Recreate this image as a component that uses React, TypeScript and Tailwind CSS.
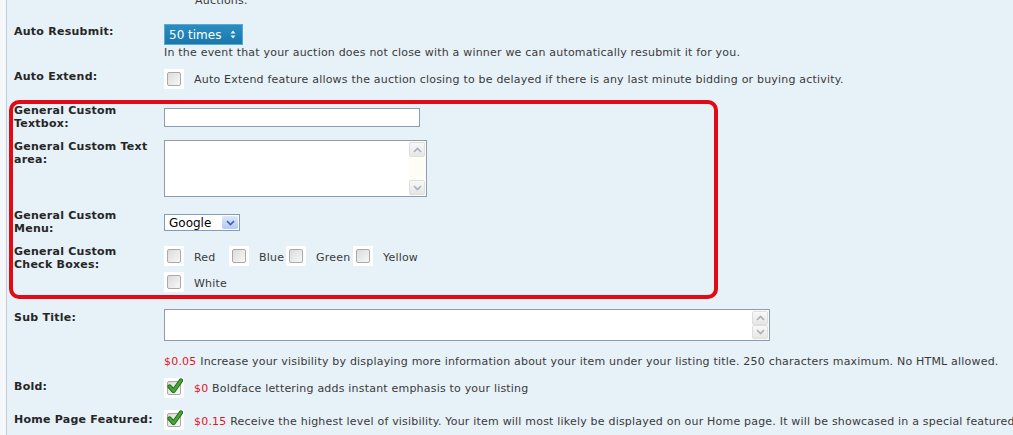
import { FC, JSX, ReactNode } from 'react';
import { clsx } from 'clsx';

const labelClasses = 'w-[150px] shrink-0 text-[11px] leading-[13px] font-bold tracking-[0.25px] text-[#262626]';
const textClasses = 'text-[11px] leading-[13px] tracking-[0.2px] text-[#3a3a3a]';

const Checkbox: FC<{ checked?: boolean }> = ({ checked }): JSX.Element => (
  <span className="relative flex h-[20px] w-[20px] shrink-0 items-center justify-center bg-white">
    <span className="h-[14px] w-[14px] rounded-[2px] border border-[#a9a9a9] bg-linear-to-br from-[#dcdcdc] to-[#f7f7f7]" />
    {checked && (
      <svg
        className="absolute top-[0px] left-[3px]"
        width="16"
        height="16"
        viewBox="0 0 16 16"
        aria-hidden="true"
      >
        <path d="M2.5 8.5 L6.5 13 L14 2.5" fill="none" stroke="#1f5f16" strokeWidth="4.2" strokeLinecap="round" strokeLinejoin="round" />
        <path d="M2.5 8.5 L6.5 13 L14 2.5" fill="none" stroke="#46a834" strokeWidth="2.6" strokeLinecap="round" strokeLinejoin="round" />
      </svg>
    )}
  </span>
);

const Chevron: FC<{ up?: boolean; color?: string }> = ({ up, color = '#a9b0b8' }): JSX.Element => (
  <svg width="9" height="6" viewBox="0 0 9 6" aria-hidden="true">
    <path d={up ? 'M1 5 L4.5 1.5 L8 5' : 'M1 1 L4.5 4.5 L8 1'} fill="none" stroke={color} strokeWidth="1.6" />
  </svg>
);

const ScrollArrows: FC = (): JSX.Element => (
  <div className="flex w-[17px] shrink-0 flex-col justify-between bg-[#fdfdf6] py-[1px] pr-[1px]">
    <span className="flex h-[15px] items-center justify-center rounded-[2px] border border-[#dedede] bg-linear-to-b from-[#f8f8f8] to-[#e6e6e6]">
      <Chevron up />
    </span>
    <span className="flex h-[15px] items-center justify-center rounded-[2px] border border-[#dedede] bg-linear-to-b from-[#f8f8f8] to-[#e6e6e6]">
      <Chevron />
    </span>
  </div>
);

const Row: FC<{ className?: string; label: ReactNode; labelClassName?: string; children: ReactNode }> = ({
  className,
  label,
  labelClassName,
  children,
}): JSX.Element => (
  <div className={clsx('flex items-start', className)}>
    <div className={clsx(labelClasses, labelClassName)}>{label}</div>
    <div className="min-w-0 flex-1">{children}</div>
  </div>
);

const CheckItem: FC<{ text: string; width: string }> = ({ text, width }): JSX.Element => (
  <div className="flex items-start">
    <Checkbox />
    <span className={clsx(textClasses, 'ml-[10px] pt-[5px] whitespace-nowrap', width)}>{text}</span>
  </div>
);

const Price: FC<{ value: string }> = ({ value }): JSX.Element => <span className="text-[#e3161d]">{value}</span>;

export default function App(): JSX.Element {
  return (
    <div className="flex h-[435px] w-[1013px] overflow-hidden bg-[#f4f8fb] font-['DejaVu_Sans',Verdana,sans-serif]">
      <div className="ml-[6px] flex-1 overflow-hidden border-l border-[#c4cdd5] bg-[#e7f1f8] pl-[7px]">
        {/* tail of the previous option */}
        <div className={clsx(textClasses, 'mt-[-6px] ml-[181px]')}>Auctions.</div>

        <Row className="mt-[17px]" label="Auto Resubmit:" labelClassName="pt-[1px]">
          <div className="flex h-[21px] w-[79px] items-center justify-between border border-[#5aa9d3] bg-linear-to-b from-[#2a8dc2] to-[#1878ad] pr-[6px] pl-[4px] text-[12px] text-white">
            <span>50 times</span>
            <svg width="6" height="9" viewBox="0 0 6 9" aria-hidden="true">
              <path d="M0.5 3.5 L3 0.5 L5.5 3.5 Z M0.5 5.5 L3 8.5 L5.5 5.5 Z" fill="#e8f4fb" />
            </svg>
          </div>
          <div className={clsx(textClasses, 'mt-[1px] whitespace-nowrap')}>
            In the event that your auction does not close with a winner we can automatically resubmit it for you.
          </div>
        </Row>

        <Row className="mt-[10px]" label="Auto Extend:" labelClassName="pt-[1px]">
          <div className="flex items-start">
            <Checkbox />
            <span className={clsx(textClasses, 'ml-[10px] pt-[4px] whitespace-nowrap')}>
              Auto Extend feature allows the auction closing to be delayed if there is any last minute bidding or buying activity.
            </span>
          </div>
        </Row>

        {/* highlighted custom fields */}
        <div className="mt-[11px] -ml-[5px] w-[709px] rounded-[10px] border-[4px] border-[#e20a14] pb-[3px] pl-[1px]">
          <Row label={<>General Custom<br />Textbox:</>}>
            <input
              type="text"
              className="mt-[4px] block h-[19px] w-[256px] border border-[#8d9daf] bg-white outline-none"
            />
          </Row>

          <Row className="mt-[10px]" label={<>General Custom Text<br />area:</>}>
            <div className="flex h-[57px] w-[263px] border border-[#8d9daf] bg-white">
              <textarea className="h-full min-w-0 flex-1 resize-none overflow-hidden bg-white outline-none" />
              <ScrollArrows />
            </div>
          </Row>

          <Row className="mt-[12px]" label={<>General Custom<br />Menu:</>}>
            <div className="mt-[5px] flex h-[17px] w-[76px] items-center justify-between border border-[#7f9db9] bg-white pr-[1px] pl-[4px]">
              <span className="text-[12px] leading-[14px] text-black">Google</span>
              <span className="flex h-[13px] w-[16px] items-center justify-center rounded-[2px] bg-linear-to-b from-[#dde7fb] to-[#b5c9f2]">
                <Chevron color="#3b5fb0" />
              </span>
            </div>
          </Row>

          <Row className="mt-[10px]" label={<>General Custom<br />Check Boxes:</>}>
            <div className="mt-[1px] flex items-start">
              <CheckItem text="Red" width="w-[35px]" />
              <CheckItem text="Blue" width="w-[27px]" />
              <CheckItem text="Green" width="w-[37px]" />
              <CheckItem text="Yellow" width="w-[40px]" />
            </div>
            <div className="mt-[6px]">
              <CheckItem text="White" width="w-[40px]" />
            </div>
          </Row>
        </div>

        <Row className="mt-[10px]" label="Sub Title:" labelClassName="pt-[2px]">
          <div className="flex h-[32px] w-[606px] border border-[#8d9daf] bg-white">
            <textarea className="h-full min-w-0 flex-1 resize-none overflow-hidden bg-white outline-none" />
            <ScrollArrows />
          </div>
          <div className={clsx(textClasses, 'mt-[14px] whitespace-nowrap')}>
            <Price value="$0.05" /> Increase your visibility by displaying more information about your item under your listing title. 250 characters maximum. No HTML allowed.
          </div>
        </Row>

        <Row className="mt-[10px]" label="Bold:" labelClassName="pt-[2px]">
          <div className="flex items-start">
            <Checkbox checked />
            <span className={clsx(textClasses, 'ml-[10px] pt-[4px] whitespace-nowrap')}>
              <Price value="$0" /> Boldface lettering adds instant emphasis to your listing
            </span>
          </div>
        </Row>

        <Row className="mt-[12px]" label="Home Page Featured:" labelClassName="pt-[3px] whitespace-nowrap">
          <div className="flex items-start">
            <Checkbox checked />
            <span className={clsx(textClasses, 'ml-[10px] pt-[5px] whitespace-nowrap')}>
              <Price value="$0.15" /> Receive the highest level of visibility. Your item will most likely be displayed on our Home page. It will be showcased in a special featured section.
            </span>
          </div>
        </Row>
      </div>
    </div>
  );
}
